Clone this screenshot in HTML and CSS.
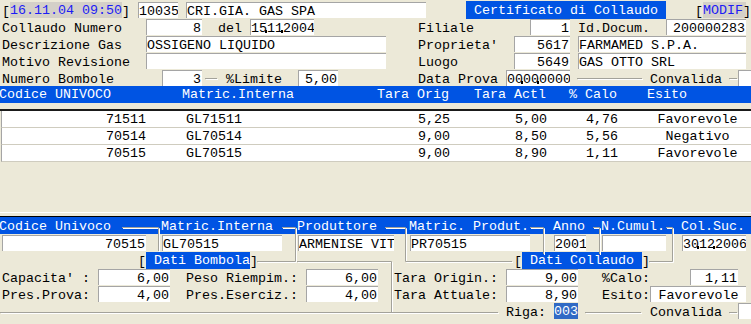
FILE: index.html
```html
<!DOCTYPE html>
<html>
<head>
<meta charset="utf-8">
<link rel="stylesheet" href="styles.css">
</head>
<body>
<div class="screen">
  <div class="form-top">
    <div class="line">
      <span class="t c0">[</span>
      <span class="stamp c1 s14">16.11.04 09:50</span>
      <span class="t c15">]</span>
      <span class="box c17 s5">10035</span>
      <span class="box c23 s30">CRI.GIA. GAS SPA</span>
      <span class="title c58 s25">Certificato di Collaudo</span>
      <span class="t c87 pull">[</span>
      <span class="stamp c88 s5 pull">MODIF</span>
      <span class="t c93 pull">]</span>
    </div>
    <div class="line">
      <span class="t c0">Collaudo Numero</span>
      <span class="box c18 s7 r">8</span>
      <span class="t c27">del</span>
      <span class="box c31 s8 date">15112004</span>
      <span class="t c52">Filiale</span>
      <span class="box c66 s5 r">1</span>
      <span class="t c72">Id.Docum.</span>
      <span class="box c83 s10 r">200000283</span>
    </div>
    <div class="line">
      <span class="t c0">Descrizione Gas</span>
      <span class="box c18 s30">OSSIGENO LIQUIDO</span>
      <span class="t c52">Proprieta'</span>
      <span class="box c64 s7 r">5617</span>
      <span class="box c72 s21">FARMAMED S.P.A.</span>
    </div>
    <div class="line">
      <span class="t c0">Motivo Revisione</span>
      <span class="box c18 s30"></span>
      <span class="t c52">Luogo</span>
      <span class="box c64 s7 r">5649</span>
      <span class="box c72 s21">GAS OTTO SRL</span>
    </div>
    <div class="line">
      <span class="t c0">Numero Bombole</span>
      <span class="box c20 s5 r">3</span>
      <span class="t c28">%Limite</span>
      <span class="box c37 s5 r">5,00</span>
      <span class="t c52">Data Prova</span>
      <span class="box c63 s8 date">00000000</span>
      <span class="t c81">Convalida</span>
      <span class="box c92 s2"></span>
    </div>
  </div>

  <div class="thead1">
    <span class="cell k-cod hl">Codice UNIVOCO</span>
    <span class="cell k-mat hl">Matric.Interna</span>
    <span class="cell k-num">Tara Orig</span>
    <span class="cell k-act">Tara Actl</span>
    <span class="cell k-calo">% Calo</span>
    <span class="cell k-esito hl">Esito</span>
  </div>

  <div class="list">
    <div class="row">
      <span class="cell k-cod">71511</span>
      <span class="cell k-mat">GL71511</span>
      <span class="cell k-num">5,25</span>
      <span class="cell k-act">5,00</span>
      <span class="cell k-calo">4,76</span>
      <span class="cell k-esito">Favorevole</span>
    </div>
    <div class="row">
      <span class="cell k-cod">70514</span>
      <span class="cell k-mat">GL70514</span>
      <span class="cell k-num">9,00</span>
      <span class="cell k-act">8,50</span>
      <span class="cell k-calo">5,56</span>
      <span class="cell k-esito">Negativo</span>
    </div>
    <div class="row">
      <span class="cell k-cod">70515</span>
      <span class="cell k-mat">GL70515</span>
      <span class="cell k-num">9,00</span>
      <span class="cell k-act">8,90</span>
      <span class="cell k-calo">1,11</span>
      <span class="cell k-esito">Favorevole</span>
    </div>
  </div>

  <div class="split"></div>

  <div class="line thead2">
    <span class="t c0 nudge">Codice Univoco</span>
    <span class="t c20">Matric.Interna</span>
    <span class="t c37">Produttore</span>
    <span class="t c51">Matric. Produt.</span>
    <span class="t c69">Anno</span>
    <span class="t c75">N.Cumul.</span>
    <span class="t c85">Col.Suc.</span>
  </div>

  <div class="form-bot">
    <div class="line">
      <span class="box c0 s18 r">70515</span>
      <span class="box c20 s15">GL70515</span>
      <span class="box c37 s12">ARMENISE VIT</span>
      <span class="box c51 s15">PR70515</span>
      <span class="box c69 s4">2001</span>
      <span class="box c75 s8"></span>
      <span class="box c85 s8 date">30122006</span>
    </div>
    <div class="line">
      <span class="t c17">[</span>
      <span class="group c18 s13"> Dati Bombola</span>
      <span class="t c31">]</span>
      <span class="t c64">[</span>
      <span class="group c65 s15"> Dati Collaudo </span>
      <span class="t c80">]</span>
    </div>
    <div class="line">
      <span class="t c0">Capacita' :</span>
      <span class="box c12 s9 r">6,00</span>
      <span class="t c23">Peso Riempim.:</span>
      <span class="box c38 s9 r">6,00</span>
      <span class="t c49">Tara Origin.:</span>
      <span class="box c63 s9 r">9,00</span>
      <span class="t c75">%Calo:</span>
      <span class="box c86 s6 r">1,11</span>
    </div>
    <div class="line">
      <span class="t c0">Pres.Prova:</span>
      <span class="box c12 s9 r">4,00</span>
      <span class="t c23">Pres.Eserciz.:</span>
      <span class="box c38 s9 r">4,00</span>
      <span class="t c49">Tara Attuale:</span>
      <span class="box c63 s9 r">8,90</span>
      <span class="t c75">Esito:</span>
      <span class="box c81 s12 ctr">Favorevole</span>
    </div>
    <div class="line">
      <span class="t c63">Riga:</span>
      <span class="sel c69 s3">003</span>
      <span class="t c81">Convalida</span>
      <span class="box c92 s2"></span>
    </div>
  </div>

  <svg class="frames" width="751" height="324" viewBox="0 0 751 324">
    <defs>
      <path id="fr" fill="none" d="M205 78.5H217 M577 78.5H642 M729 78.5H737 M122 227.5H158.5V251 M282 227.5H295.5V261.5H257 M385 227.5H405.5V261.5H512 M530 227.5H543.5V254 M593 227.5H599.5V254 M666 227.5H672.5V261.5H649 M297 261.5H391.5V312.5 M0 312.5H498 M585 312.5H641 M729 312.5H737"/>
    </defs>
    <use href="#fr" stroke="#ffffff" transform="translate(1 1)"/>
    <use href="#fr" stroke="#a3a29a"/>
  </svg>
</div>
</body>
</html>
```

FILE: styles.css
```css
* { box-sizing: content-box; }

body {
  margin: 0;
  background: #ece9d8;
  font-family: "Liberation Mono", "Courier New", monospace;
  font-size: 13.333px;
  color: #000;
}

.screen {
  position: relative;
  width: 751px;
  height: 324px;
  overflow: hidden;
}

.form-top { padding-top: 1px; }

.line {
  display: grid;
  grid-template-columns: repeat(94, 8px);
  height: 17px;
  padding-left: 2px;
}

.line > * {
  grid-row: 1;
  white-space: pre;
  overflow: visible;
}

.t {
  padding-top: 2px;
  line-height: 17px;
}

.pull { margin-left: -3px; }

.box {
  position: relative;
  margin-top: 1px;
  height: 15px;
  line-height: 17px;
  border-top: 1px solid #a5a5a5;
  border-left: 1px solid #a5a5a5;
  background: #fff;
  overflow: hidden;
}

.r { text-align: right; padding-right: 1px; }
.ctr { text-align: center; }

.stamp {
  margin-top: 1px;
  height: 15px;
  padding-top: 1px;
  line-height: 16px;
  background: #d4d0c8;
  color: #1c1cf5;
}

.title {
  height: 17px;
  padding-top: 1px;
  line-height: 17px;
  background: #0054e3;
  color: #fff;
  text-align: center;
}

.group {
  margin-top: 1px;
  height: 17px;
  line-height: 17px;
  background: #0054e3;
  color: #fff;
}

.sel {
  margin-top: 1px;
  height: 16px;
  line-height: 17px;
  background: #316ac5;
  color: #fff;
}

.date::before,
.date::after {
  content: "";
  position: absolute;
  top: 10px;
  width: 2px;
  height: 3px;
  background: #000;
}
.date::before { left: 14px; }
.date::after { left: 30px; }

/* grid column starts */
.c0 { grid-column-start: 1; }
.c1 { grid-column-start: 2; }
.c12 { grid-column-start: 13; }
.c15 { grid-column-start: 16; }
.c17 { grid-column-start: 18; }
.c18 { grid-column-start: 19; }
.c20 { grid-column-start: 21; }
.c23 { grid-column-start: 24; }
.c27 { grid-column-start: 28; }
.c28 { grid-column-start: 29; }
.c31 { grid-column-start: 32; }
.c37 { grid-column-start: 38; }
.c38 { grid-column-start: 39; }
.c49 { grid-column-start: 50; }
.c51 { grid-column-start: 52; }
.c52 { grid-column-start: 53; }
.c58 { grid-column-start: 59; }
.c63 { grid-column-start: 64; }
.c64 { grid-column-start: 65; }
.c65 { grid-column-start: 66; }
.c66 { grid-column-start: 67; }
.c69 { grid-column-start: 70; }
.c72 { grid-column-start: 73; }
.c75 { grid-column-start: 76; }
.c80 { grid-column-start: 81; }
.c81 { grid-column-start: 82; }
.c83 { grid-column-start: 84; }
.c85 { grid-column-start: 86; }
.c86 { grid-column-start: 87; }
.c87 { grid-column-start: 88; }
.c88 { grid-column-start: 89; }
.c92 { grid-column-start: 93; }
.c93 { grid-column-start: 94; }

/* spans */
.s2 { grid-column-end: span 2; }
.s3 { grid-column-end: span 3; }
.s4 { grid-column-end: span 4; }
.s5 { grid-column-end: span 5; }
.s6 { grid-column-end: span 6; }
.s7 { grid-column-end: span 7; }
.s8 { grid-column-end: span 8; }
.s9 { grid-column-end: span 9; }
.s10 { grid-column-end: span 10; }
.s12 { grid-column-end: span 12; }
.s13 { grid-column-end: span 13; }
.s14 { grid-column-end: span 14; }
.s15 { grid-column-end: span 15; }
.s18 { grid-column-end: span 18; }
.s21 { grid-column-end: span 21; }
.s25 { grid-column-end: span 25; }
.s30 { grid-column-end: span 30; }

/* list header + rows */
.thead1 {
  display: flex;
  height: 17px;
  line-height: 17px;
  background: #0054e3;
  color: #fff;
}

.cell {
  flex: none;
  white-space: pre;
  box-sizing: border-box;
}
.k-cod { width: 148px; text-align: right; padding-right: 2px; }
.k-mat { width: 212px; padding-left: 38px; }
.k-num { width: 92px; text-align: right; padding-right: 2px; }
.k-act { width: 97px; text-align: right; padding-right: 2px; }
.k-calo { width: 71px; text-align: right; padding-right: 2px; }
.k-esito { width: 131px; padding-left: 24px; text-align: center; }

.thead1 .hl { text-align: left; }
.thead1 .k-cod { padding-left: 0; margin-left: -1px; }
.thead1 .k-mat { padding-left: 35px; }
.thead1 .k-esito { padding-left: 28px; }

.list {
  margin-top: 6px;
  border-top: 2px solid #1a1a1a;
}

.row {
  display: flex;
  height: 16px;
  line-height: 18px;
  background: #fff;
  border-bottom: 1px solid #cfccbf;
  border-left: 1px solid #a5a5a5;
  margin-left: 1px;
}
.row .k-cod { width: 146px; }

.split {
  margin-top: 50px;
  height: 3px;
  border-top: 1px solid #fff;
}

.thead2 {
  border-top: 1px solid #000;
  background: #0054e3;
  color: #fff;
  padding-left: 1px;
}
.thead2 .t { padding-top: 1px; }
.thead2 .nudge { margin-left: -2px; }

.frames {
  position: absolute;
  left: 0;
  top: 0;
  pointer-events: none;
}
```
